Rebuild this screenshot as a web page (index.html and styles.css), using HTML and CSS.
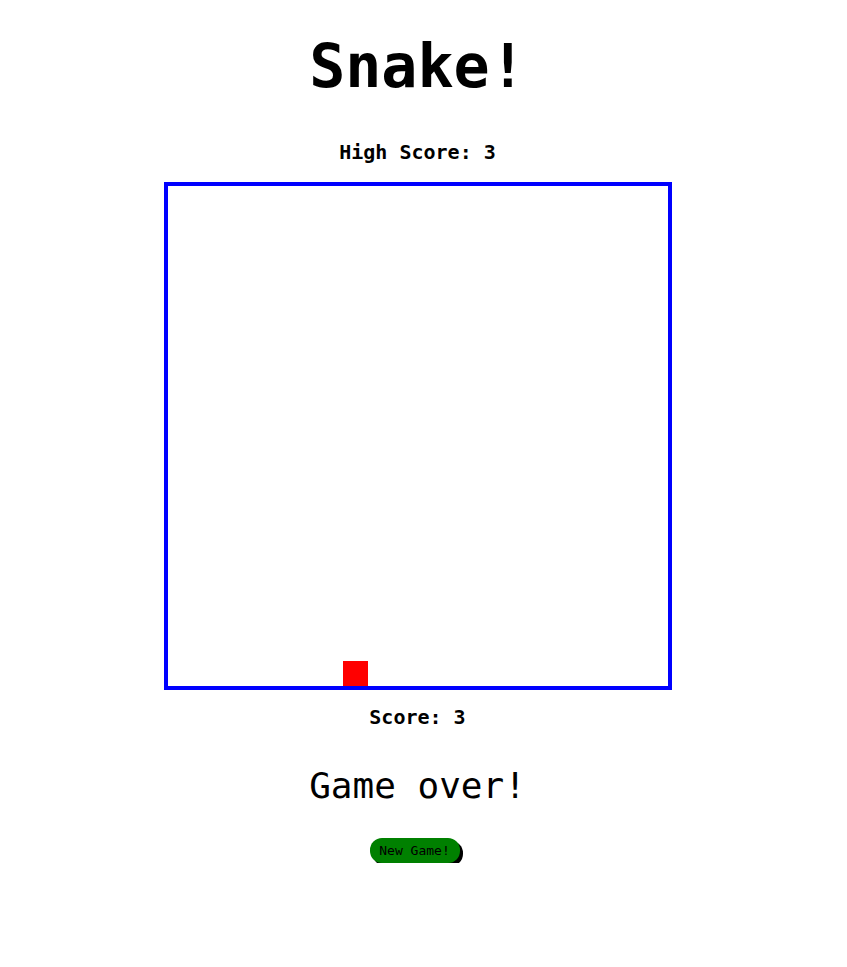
FILE: index.html
```html
<!DOCTYPE html>
<html>
<head>
<meta charset="utf-8">
<title>Snake!</title>
<link rel="stylesheet" href="styles.css">
</head>
<body>
<div class="app">
  <h1 class="title">Snake!</h1>
  <div class="high-score">High Score: 3</div>
  <div class="board">
    <div class="cell food" style="grid-column: 8; grid-row: 20;"></div>
  </div>
  <div class="score">Score: 3</div>
  <div class="game-over">Game over!</div>
  <button class="new-game">New Game!</button>
</div>
</body>
</html>
```
FILE: styles.css
```css
html, body {
  margin: 0;
  padding: 0;
  background: #fff;
}
body {
  font-family: "DejaVu Sans Mono", monospace;
  color: #000;
}
.app {
  display: flex;
  flex-direction: column;
  align-items: center;
  padding-right: 12px;
}
.title {
  font-size: 60px;
  font-weight: bold;
  line-height: 1;
  margin: 36px 0 0 0;
}
.high-score {
  font-size: 20px;
  font-weight: bold;
  margin-top: 44px;
  line-height: 24px;
}
.board {
  margin-top: 18px;
  width: 500px;
  height: 500px;
  border: 4px solid #0000ff;
  display: grid;
  grid-template-columns: repeat(20, 25px);
  grid-template-rows: repeat(20, 25px);
}
.food {
  background: #ff0000;
}
.score {
  font-size: 20px;
  font-weight: bold;
  margin-top: 15px;
  line-height: 24px;
}
.game-over {
  font-size: 36px;
  margin-top: 36px;
  line-height: 42px;
}
.new-game {
  margin-top: 31px;
  margin-right: 6px;
  width: 90px;
  height: 25px;
  padding: 0;
  border: none;
  border-radius: 12px;
  background: #008000;
  color: #000;
  font-family: "DejaVu Sans Mono", monospace;
  font-size: 13px;
  box-shadow: 3px 3px 0 #000;
}
```
